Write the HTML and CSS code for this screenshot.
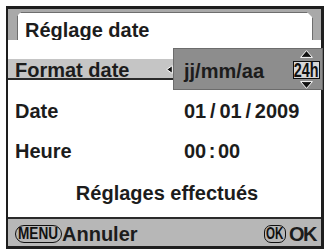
FILE: index.html
```html
<!DOCTYPE html>
<html>
<head>
<meta charset="utf-8">
<link rel="stylesheet" href="styles.css">
</head>
<body>
<div class="screen">
  <div class="title"><div class="title-in">Réglage date</div></div>
  <div class="row-sel"><span class="label">Format date</span></div>
  <div class="row row-first"><span class="label">Date</span><span class="value">01<span class="sl">/</span>01<span class="sl">/</span>2009</span></div>
  <div class="row"><span class="label">Heure</span><span class="value">00<span class="co">:</span>00</span></div>
  <div class="done">Réglages effectués</div>
  <div class="bar">
    <div class="bar-side"><span class="key key-menu"><span class="key-txt">MENU</span></span>Annuler</div>
    <div class="bar-side"><span class="key key-ok"><span class="key-txt key-txt-ok">OK</span></span><span class="ok-txt">OK</span></div>
  </div>
  <svg class="larrow" width="7" height="9" viewBox="0 0 7 9"><polygon points="6.3,0.6 6.3,8.4 0.7,4.5" fill="#111" stroke="#fff" stroke-width="1"/></svg>
  <div class="popup">
    <span class="fmt">jj/mm/aa</span>
    <div class="clock">
      <svg class="arr" width="13" height="8" viewBox="0 0 13 8"><polygon points="6.5,0.6 12.4,7.4 0.6,7.4" fill="#111" stroke="#fff" stroke-width="1"/></svg>
      <div class="h24"><span class="h24-txt">24h</span></div>
      <svg class="arr" width="13" height="8" viewBox="0 0 13 8"><polygon points="6.5,7.4 12.4,0.6 0.6,0.6" fill="#111" stroke="#fff" stroke-width="1"/></svg>
    </div>
  </div>
</div>
</body>
</html>
```
FILE: styles.css
```css
html, body {
  margin: 0;
  padding: 0;
  background: #fff;
  overflow: hidden;
}
body {
  font-family: "Liberation Sans", Arial, sans-serif;
  font-weight: bold;
  font-size: 20px;
  color: #1c1c1c;
}
.screen {
  position: relative;
  box-sizing: border-box;
  width: 318px;
  height: 243px;
  margin: 6px 0 0 6px;
  border-style: solid;
  border-color: #1e1e1e;
  border-width: 3px 3px 3px 2px;
  display: flex;
  flex-direction: column;
}
.title {
  height: 31px;
  box-sizing: border-box;
  background: #a9a9a9;
  padding: 3px 8px 0 9px;
}
.title-in {
  height: 100%;
  box-sizing: border-box;
  background: #fff;
  border: 1px solid #6e6e6e;
  border-bottom: none;
  clip-path: polygon(4px 0, calc(100% - 6px) 0, 100% 6px, 100% 100%, 0 100%, 0 4px);
  padding: 7px 0 0 7px;
  line-height: 20px;
}
.row-sel {
  margin-top: 19px;
  height: 21px;
  box-sizing: border-box;
  background: #c5c5c5;
  border-bottom: 2px solid #2a2a2a;
  line-height: 23px;
}
.label {
  padding-left: 7px;
}
.row {
  display: grid;
  grid-template-columns: 176px 1fr;
  height: 40px;
  line-height: 40px;
}
.row-first {
  margin-top: 11px;
}
.sl {
  margin: 0 3.8px;
}
.co {
  margin: 0 2.5px;
}
.done {
  height: 40px;
  padding: 2px 0 0 5px;
  line-height: 40px;
  text-align: center;
}
.bar {
  margin-top: auto;
  height: 29px;
  box-sizing: border-box;
  border-top: 2px solid #2a2a2a;
  background: #b7b7b7;
  display: flex;
  justify-content: space-between;
  padding: 0 5px 0 7px;
}
.bar-side {
  display: flex;
  align-items: flex-start;
  line-height: 31px;
  height: 27px;
}
.key {
  margin-top: 6px;
  height: 18px;
  box-sizing: border-box;
  border: 1.5px solid #111;
  display: flex;
  align-items: center;
  justify-content: center;
  line-height: 1;
}
.key-menu {
  width: 47px;
  border-radius: 9px;
}
.key-ok {
  width: 22px;
  border-radius: 7px;
  margin-right: 3px;
}
.key-txt {
  display: inline-block;
  font-size: 17px;
  line-height: 16px;
  transform: scaleX(0.8);
  color: #111;
}
.key-txt-ok {
  transform: scaleX(0.68);
}
.ok-txt {
  letter-spacing: -1.5px;
}
.larrow {
  position: absolute;
  left: 158px;
  top: 56px;
}
.popup {
  position: absolute;
  left: 165px;
  top: 39px;
  width: 150px;
  height: 42px;
  box-sizing: border-box;
  border: 1px solid #6c6c6c;
  background: #8d8d8d;
  display: flex;
  align-items: flex-start;
}
.fmt {
  margin: 11.5px 0 0 10px;
  line-height: 20px;
}
.clock {
  margin-left: auto;
  margin-right: 2px;
  width: 27px;
  padding-top: 1px;
  display: flex;
  flex-direction: column;
  align-items: center;
}
.arr {
  display: block;
}
.h24 {
  margin: 3px 0 2px;
  width: 27px;
  height: 18px;
  box-sizing: border-box;
  border: 1px solid #111;
  background: #d8d8d8;
  display: flex;
  align-items: center;
  justify-content: center;
}
.h24-txt {
  display: inline-block;
  font-size: 20px;
  line-height: 16px;
  transform: scaleX(0.72);
  color: #111;
}
```
